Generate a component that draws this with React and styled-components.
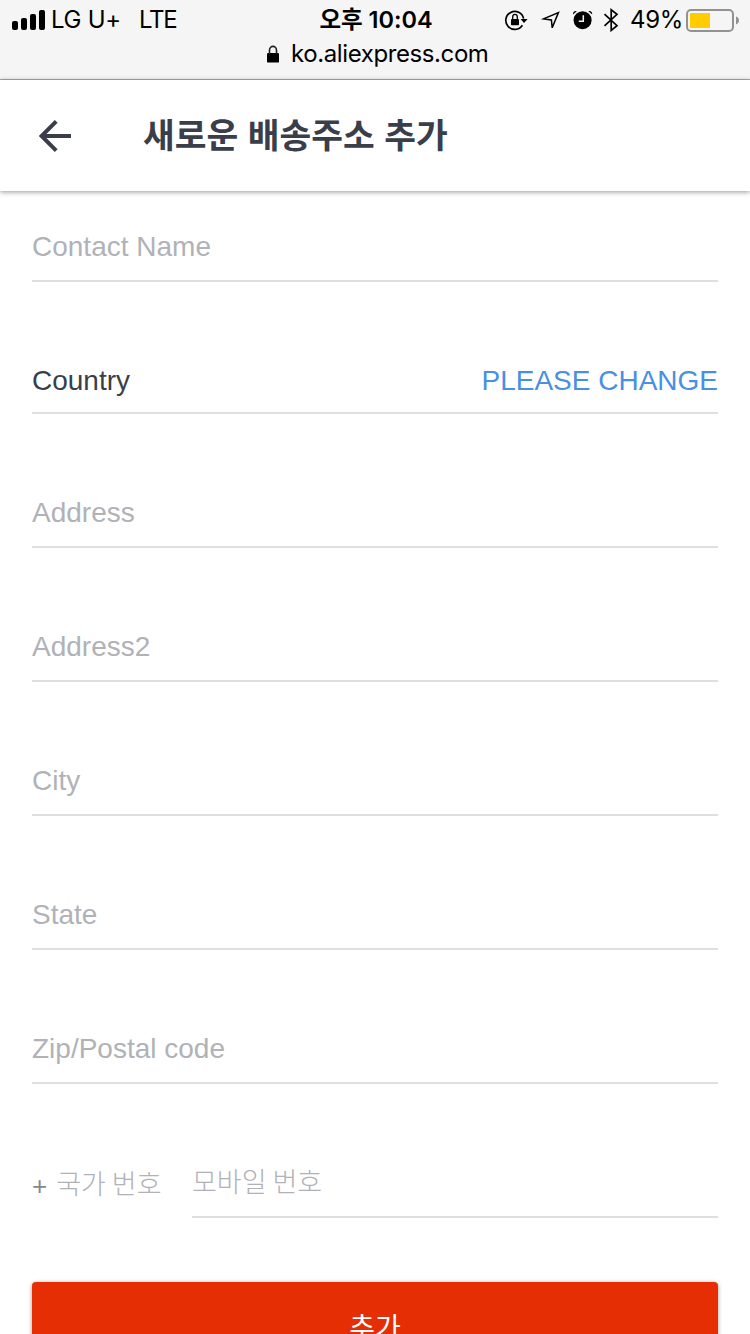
import React from "react";
import styled, { createGlobalStyle } from "styled-components";

const fields = [
    { label: "Contact Name" },
    { label: "Country", action: "PLEASE CHANGE" },
    { label: "Address" },
    { label: "Address2" },
    { label: "City" },
    { label: "State" },
    { label: "Zip/Postal code" },
];

const StatusBar = () => (
    <Status>
        <Carrier>
            <svg width="34" height="24" viewBox="0 0 34 24">
                <rect x="0" y="13" width="6" height="9" rx="2" />
                <rect x="9" y="10" width="6" height="12" rx="2" />
                <rect x="18" y="6" width="6" height="16" rx="2" />
                <rect x="27" y="2" width="6" height="20" rx="2" />
            </svg>
            <CarrierName>LG U+</CarrierName>
            <Network>LTE</Network>
        </Carrier>
        <Clock>오후 10:04</Clock>
        <Indicators>
            <svg width="24" height="24" viewBox="0 0 24 24">
                <path
                    d="M19.6 10.6A9 9 0 1 0 18.4 17.2"
                    fill="none"
                    stroke="#000"
                    strokeWidth="1.7"
                />
                <path d="M16.6 11H23.6L20 15Z" />
                <rect x="7" y="11" width="8" height="6.3" rx="0.8" />
                <path
                    d="M8.7 11.5V9a2.3 2.6 0 0 1 4.6 0v2.5"
                    fill="none"
                    stroke="#000"
                    strokeWidth="1.3"
                />
            </svg>
            <LocationIcon width="22" height="24" viewBox="0 0 22 24">
                <path
                    d="M18.4 4.6L12.2 19.8L11.4 11.9L3.6 10.9Z"
                    fill="none"
                    stroke="#000"
                    strokeWidth="1.5"
                />
            </LocationIcon>
            <AlarmIcon width="22" height="24" viewBox="0 0 22 24">
                <circle cx="10.6" cy="12.2" r="9" />
                <path d="M1 6.6C.8 4 2.4 2.7 4.8 3.2ZM20.2 6.6C20.4 4 18.8 2.7 16.4 3.2Z" />
                <path
                    d="M11.3 7.3V13.2H6.8"
                    fill="none"
                    stroke="#f5f5f5"
                    strokeWidth="1.5"
                />
            </AlarmIcon>
            <BluetoothIcon width="16" height="24" viewBox="0 0 16 24">
                <path
                    d="M1.5 6.2L14 17.6L8.2 22.4V1.8L14 6.4L1.5 17.8"
                    fill="none"
                    stroke="#000"
                    strokeWidth="1.7"
                />
            </BluetoothIcon>
            <Percent>49%</Percent>
            <svg width="54" height="24" viewBox="0 0 54 24">
                <rect
                    x="1"
                    y="2"
                    width="46"
                    height="21"
                    rx="4"
                    fill="none"
                    stroke="#929294"
                    strokeWidth="2"
                />
                <rect x="4" y="5" width="20" height="15" rx="0.6" fill="#fc0" />
                <path d="M50 8.6C54 9.5 54 15.5 50 16.4Z" fill="#929294" />
            </svg>
        </Indicators>
    </Status>
);

const App = () => {
    return (
        <Page>
            <GlobalStyle />
            <BrowserBar>
                <StatusBar />
                <Address>
                    <svg width="12" height="18" viewBox="0 0 12 18">
                        <rect y="8" width="12" height="9.6" rx="1.2" />
                        <path
                            d="M2.5 9V5.2a3.5 3.8 0 0 1 7 0V9"
                            fill="none"
                            stroke="#222"
                            strokeWidth="1.6"
                        />
                    </svg>
                    <Domain>ko.aliexpress.com</Domain>
                </Address>
            </BrowserBar>
            <Header>
                <BackButton aria-label="back">
                    <svg width="34" height="34" viewBox="0 0 34 34">
                        <path
                            d="M18.2 2.4L3.6 17L18.2 31.6M3.6 17H33"
                            fill="none"
                            stroke="#3a3e4a"
                            strokeWidth="4"
                        />
                    </svg>
                </BackButton>
                <Title>새로운 배송주소 추가</Title>
            </Header>
            <Form>
                {fields.map(({ label, action }) => (
                    <Field key={label} $filled={Boolean(action)}>
                        <span>{label}</span>
                        {action && <Action type="button">{action}</Action>}
                    </Field>
                ))}
                <PhoneRow>
                    <CountryCode>
                        <Plus>+</Plus>
                        <Hint>국가 번호</Hint>
                    </CountryCode>
                    <PhoneNumber>
                        <Hint>모바일 번호</Hint>
                    </PhoneNumber>
                </PhoneRow>
                <SubmitButton type="button">추가</SubmitButton>
            </Form>
        </Page>
    );
};

const GlobalStyle = createGlobalStyle`
    * {
        box-sizing: border-box;
    }
    body {
        margin: 0;
        background: #fff;
        font-family: "Liberation Sans", "Noto Sans CJK KR", sans-serif;
    }
    svg {
        display: block;
        flex: none;
    }
    button {
        border: 0;
        padding: 0;
        background: none;
        font: inherit;
    }
`;

const Page = styled.main`
    height: 1334px;
    overflow: hidden;
    display: flex;
    flex-direction: column;
`;

const BrowserBar = styled.div`
    flex: none;
    height: 80px;
    background: #f5f5f5;
    border-bottom: 1px solid #acacac;
    color: #000;
    font-family: Inter, "Noto Sans CJK KR", sans-serif;
    white-space: nowrap;
`;

const Status = styled.div`
    display: grid;
    grid-template-columns: 1fr 130px 1fr;
    align-items: center;
    height: 40px;
    padding: 0 10px 0 12px;
    font-size: 24px;
    line-height: 40px;
`;

const Carrier = styled.div`
    display: flex;
    align-items: center;
`;

const CarrierName = styled.span`
    width: 88px;
    padding-left: 5px;
    letter-spacing: -0.3px;
`;

const Network = styled.span`
    padding-left: 5px;
    letter-spacing: -1.2px;
`;

const Clock = styled.span`
    text-align: center;
    font-weight: 600;
    font-size: 23.5px;
`;

const Indicators = styled.div`
    display: flex;
    align-items: center;
    justify-content: flex-end;
`;

const LocationIcon = styled.svg`
    margin-left: 12px;
`;

const AlarmIcon = styled.svg`
    margin-left: 10px;
`;

const BluetoothIcon = styled.svg`
    margin-left: 9px;
`;

const Percent = styled.span`
    width: 67px;
    padding-left: 11px;
    letter-spacing: -0.3px;
`;

const Address = styled.div`
    display: flex;
    align-items: center;
    gap: 12px;
    height: 28px;
    padding-left: 267px;
    font-size: 24px;
    line-height: 28px;
`;

const Domain = styled.span`
    letter-spacing: -0.4px;
`;

const Header = styled.header`
    flex: none;
    display: flex;
    align-items: center;
    height: 111px;
    padding-left: 38px;
    background: #fff;
    box-shadow: 0 1px 5px rgba(0, 0, 0, 0.42);
`;

const BackButton = styled.button`
    width: 105px;
`;

const Title = styled.h1`
    margin: 0;
    color: #3a3e4a;
    font-size: 34.5px;
    font-weight: 700;
    line-height: 48px;
`;

const Form = styled.form`
    padding: 0 32px;
    font-size: 28px;
`;

const Field = styled.div`
    display: flex;
    justify-content: space-between;
    align-items: flex-end;
    height: ${({ $filled }) => ($filled ? 132 : 134)}px;
    padding-bottom: ${({ $filled }) => ($filled ? 15 : 17)}px;
    border-bottom: 2px solid #dedfe0;
    color: ${({ $filled }) => ($filled ? "#3a3e4a" : "#b0b2b7")};
    line-height: 32px;
    &:first-child {
        height: 91px;
    }
`;

const Action = styled.button`
    color: #4990e2;
    line-height: 32px;
`;

const PhoneRow = styled.div`
    display: flex;
    height: 134px;
    color: #b0b2b7;
`;

const CountryCode = styled.div`
    display: flex;
    align-items: flex-end;
    gap: 9px;
    width: 160px;
    padding-bottom: 17px;
`;

const Plus = styled.span`
    color: #85878f;
    font-size: 26px;
    line-height: 30px;
`;

const PhoneNumber = styled.div`
    flex: 1;
    display: flex;
    align-items: flex-end;
    padding-bottom: 17px;
    border-bottom: 2px solid #dedfe0;
`;

const Hint = styled.span`
    font-family: "Noto Sans CJK KR", sans-serif;
    font-size: 27px;
    font-weight: 300;
    line-height: 36px;
`;

const SubmitButton = styled.button`
    display: block;
    width: 100%;
    height: 88px;
    margin-top: 64px;
    border-radius: 4px;
    background: #e62e04;
    box-shadow: 0 1px 4px rgba(0, 0, 0, 0.4);
    color: #fff;
    font-size: 28px;
`;

export default App;
